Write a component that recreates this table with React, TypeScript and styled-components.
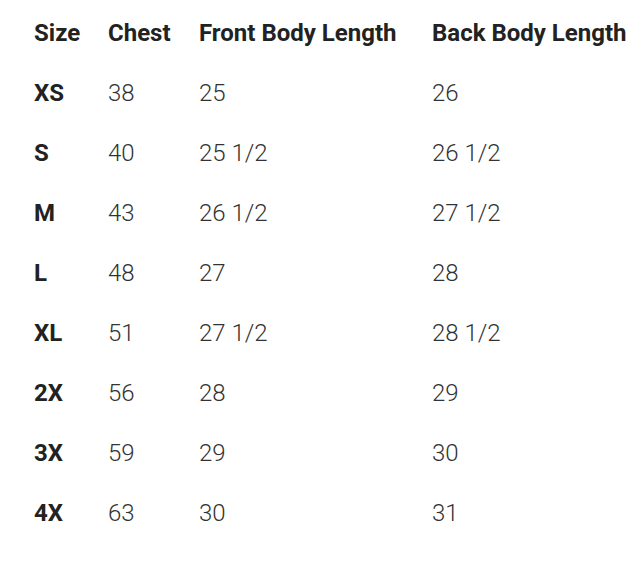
import React from "react";
import styled, { createGlobalStyle } from "styled-components";

const Global = createGlobalStyle`
  html, body { margin: 0; padding: 0; background: #fff; }
  body { font-family: Roboto, "Noto Sans", sans-serif; }
`;

const Wrap = styled.div`
  padding: 3px 0 0 34px;
`;

const Table = styled.table`
  border-collapse: collapse;
  table-layout: fixed;
`;

const Col = styled.col<{ $w: number }>`
  width: ${(p) => p.$w}px;
`;

const HeadCell = styled.th`
  height: 60px;
  padding: 0;
  text-align: left;
  vertical-align: middle;
  font-size: 24px;
  font-weight: 700;
  color: #222;
  white-space: nowrap;
`;

const SizeCell = styled.td`
  height: 60px;
  padding: 0;
  vertical-align: middle;
  font-size: 24px;
  font-weight: 700;
  color: #222;
`;

const ValueCell = styled.td`
  height: 60px;
  padding: 0;
  vertical-align: middle;
  font-size: 24px;
  font-weight: 300;
  color: #333;
  white-space: nowrap;
`;

const rows: [string, string, string, string][] = [
  ["XS", "38", "25", "26"],
  ["S", "40", "25 1/2", "26 1/2"],
  ["M", "43", "26 1/2", "27 1/2"],
  ["L", "48", "27", "28"],
  ["XL", "51", "27 1/2", "28 1/2"],
  ["2X", "56", "28", "29"],
  ["3X", "59", "29", "30"],
  ["4X", "63", "30", "31"],
];

export default function App() {
  return (
    <>
      <Global />
      <Wrap>
        <Table>
          <colgroup>
            <Col $w={74} />
            <Col $w={91} />
            <Col $w={233} />
            <Col $w={200} />
          </colgroup>
          <thead>
            <tr>
              <HeadCell>Size</HeadCell>
              <HeadCell>Chest</HeadCell>
              <HeadCell>Front Body Length</HeadCell>
              <HeadCell>Back Body Length</HeadCell>
            </tr>
          </thead>
          <tbody>
            {rows.map((r) => (
              <tr key={r[0]}>
                <SizeCell>{r[0]}</SizeCell>
                <ValueCell>{r[1]}</ValueCell>
                <ValueCell>{r[2]}</ValueCell>
                <ValueCell>{r[3]}</ValueCell>
              </tr>
            ))}
          </tbody>
        </Table>
      </Wrap>
    </>
  );
}
